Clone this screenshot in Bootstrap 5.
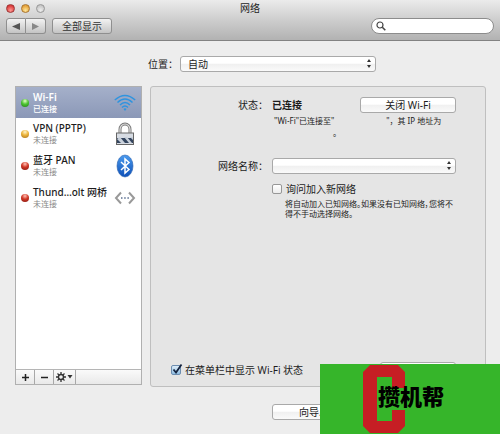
<!DOCTYPE html>
<html lang="zh-CN">
<head>
<meta charset="utf-8">
<meta name="viewport" content="width=device-width, initial-scale=1">
<title>网络</title>
<link rel="stylesheet" href="https://cdn.jsdelivr.net/npm/bootstrap@5.3.0/dist/css/bootstrap.min.css">
<style>
body{font-family:"Noto Sans","Noto Sans CJK SC",sans-serif;font-size:10px;line-height:14px;font-feature-settings:"palt";color:#1c1c1c;background:#ededed}
.titlebar{background:linear-gradient(#ebebeb,#d0d0d0 45%,#b2b2b2);border-bottom:1px solid #828282;padding:1px 6px 6px}
.titlebar .bar-title{font-size:10px;line-height:14px;margin:0;font-weight:400}
.side-col{flex:1 1 0}
.lights{gap:6px}
.light{width:9px;height:9px;border-radius:50%;border:1px solid #888;padding:0}
.light-red{background:radial-gradient(circle at 50% 75%,#ff9a94,#dc3c3c 70%);border-color:#9c3636}
.light-amber{background:radial-gradient(circle at 50% 75%,#ffe79a,#e5a33c 70%);border-color:#a87430}
.light-off{background:radial-gradient(circle at 50% 75%,#eee,#c2c2c2 80%);border-color:#979797}
.tool-row{margin-top:3px;gap:6px}
.tool{height:16px;font-size:10px;line-height:14px;padding:0 9px;border:1px solid #8f8f8f;border-radius:3px;background:linear-gradient(#f2f2f2,#c4c4c4);color:#333}
.tool-nav{width:20px;padding:0}
.tool-nav + .tool-nav{border-left:0}
.search-pill{width:123px;height:16px;border:1px solid #8c8c8c;border-radius:8px;background:#fff;padding:0 4px}
.search-pill svg{flex:none}
.search-pill input{min-width:0;height:12px;font-size:10px;background:none;outline:0}
.aqua{height:16px;font-size:10px;line-height:14px;padding:0;border:1px solid #a9a9a9;border-radius:3px;background:linear-gradient(#fff,#fff 45%,#f0f0f0 50%,#fafafa);color:#1c1c1c;text-align:center}
.pick{position:relative}
.pick select{appearance:none;width:100%;padding:0 16px 0 7px;text-align:left;display:block}
.pick svg{position:absolute;right:4px;top:3px;pointer-events:none}
.place-row{padding:15px 124px 14px 0}
.place-label{width:173px;text-align:right}
.place-row .pick{margin-left:7px}
.main-row{padding:0 14px 0 15px;gap:8px}
.services{width:127px;height:299px;background:#fff;border:1px solid #b0b0b0}
.service{height:32px;padding:0 5px;gap:4px;border:0;background:none;text-align:left;line-height:11px;color:#1c1c1c;font-weight:500}
.service small{display:block;font-size:8px;line-height:11px;color:#888;font-weight:400}
.service.chosen{height:31px;background:linear-gradient(#a5b0ca,#8b98b7);color:#fff;font-weight:600}
.service.chosen small{color:#fff;font-weight:500}
.dot{width:8px;height:8px;border-radius:50%;flex:none}
.dot-green{background:radial-gradient(circle at 50% 25%,#e6ffc8,#4cc530 45%,#267a1c)}
.dot-yellow{background:radial-gradient(circle at 50% 25%,#fff4cc,#ecb43a 45%,#a66d1c)}
.dot-red{background:radial-gradient(circle at 50% 25%,#ffc4b8,#d03524 45%,#811a14)}
.icon-box{width:22px;height:26px;flex:none}
.edit-bar{height:15px;border-top:1px solid #b5b5b5;background:linear-gradient(#fafafa,#e9e9e9)}
.edit-bar button{border:0;border-right:1px solid #a8a8a8;background:none;padding:0;width:19px;height:14px;display:flex;align-items:center;justify-content:center}
.edit-bar .gear{width:22px}
.detail{border:1px solid #bfbfbf;border-radius:3px;background:#e5e5e5;padding:10px 29px 8px 0;margin-bottom:-2px}
.field-label{width:112px;text-align:right;margin-right:9px;flex:none}
.tiny{font-size:8px;line-height:10px}
.status-note{padding:2px 0 0 123px;line-height:12px;font-feature-settings:normal}
.ssid-gap{display:inline-block;width:52px}
.addr-gap{display:inline-block;width:59px}
.wifi-toggle{width:96px}
.name-row{margin-top:19px}
.ask-row{margin:8px 0 0 121px}
.ask-note{padding:3px 0 0 134px}
.tick{appearance:none;width:10px;height:10px;margin:0;flex:none;border:1px solid #979797;border-radius:2px;background:linear-gradient(#fff,#ececec)}
.tick-wrap{position:relative;line-height:0}
.tick-wrap svg{position:absolute;left:0;bottom:0;display:none;pointer-events:none}
.tick:checked{background:linear-gradient(#dcecf8,#8fbde2);border-color:#6c8db0}
.tick:checked + svg{display:block}
.menu-row{padding-left:20px}
.adv{width:76px}
.foot-row{padding:19px 146px 14px 0}
.foot-row .aqua{width:82px}
.brand{position:absolute;right:0;bottom:0;width:180px;height:70px;background:#36b52a}
.brand svg{position:absolute;left:43px;top:1px}
.brand span{position:absolute;left:58px;top:15px;font-family:"Noto Sans CJK SC",sans-serif;font-size:22px;line-height:32px;font-weight:900;color:#000;white-space:nowrap}
</style>
<script src="https://cdn.jsdelivr.net/npm/bootstrap@5.3.0/dist/js/bootstrap.bundle.min.js"></script>
</head>
<body>
<div class="position-relative overflow-hidden min-vh-100 d-flex flex-column">
  <header class="titlebar">
    <div class="d-flex align-items-center">
      <div class="side-col d-flex lights align-items-center">
        <button class="light light-red" aria-label="关闭"></button>
        <button class="light light-amber" aria-label="最小化"></button>
        <button class="light light-off" aria-label="缩放"></button>
      </div>
      <h1 class="bar-title">网络</h1>
      <div class="side-col"></div>
    </div>
    <div class="tool-row d-flex align-items-center">
      <div class="btn-group" role="group">
        <button class="tool tool-nav rounded-end-0 d-flex align-items-center justify-content-center" aria-label="后退"><svg width="8" height="7"><path d="M8 0v7L0 3.500z" fill="#555"/></svg></button>
        <button class="tool tool-nav rounded-start-0 d-flex align-items-center justify-content-center" aria-label="前进"><svg width="8" height="7"><path d="M0 0v7l7-3.500z" fill="#888"/></svg></button>
      </div>
      <button class="tool">全部显示</button>
      <label class="search-pill ms-auto d-flex align-items-center">
        <svg width="10" height="10" viewBox="0 0 10 10" fill="none" stroke="#444"><circle cx="4" cy="4" r="3" stroke-width="1.200"/><path d="M6.300 6.300L9.300 9.300" stroke-width="1.600"/></svg>
        <input class="border-0 flex-grow-1 p-0 ms-1" type="search" aria-label="搜索">
      </label>
    </div>
  </header>

  <div class="place-row d-flex align-items-center">
    <label class="place-label" for="place">位置：</label>
    <div class="pick flex-grow-1">
      <select id="place" class="aqua"><option>自动</option></select>
      <svg width="6" height="9" viewBox="0 0 6 9" fill="#333"><path d="M3 0l2 3H1zM3 9l2-3H1z"/></svg>
    </div>
  </div>

  <main class="main-row d-flex">
    <aside class="services d-flex flex-column flex-shrink-0">
      <button class="service chosen d-flex align-items-center">
        <span class="dot dot-green"></span><span class="flex-grow-1">Wi-Fi<small>已连接</small></span>
        <svg class="icon-box" viewBox="0 0 22 26" fill="none" stroke="#2f94df" stroke-width="1.500"><path d="M.8 10Q11 1 21.200 10M3.500 12.500Q11 5.500 18.500 12.500M6 15Q11 10 16 15M8 17.500Q11 14.500 14 17.500"/><path d="M9.500 19Q11 17.500 12.500 19L11 21z" fill="#2f94df" stroke="none"/></svg>
      </button>
      <button class="service d-flex align-items-center">
        <span class="dot dot-yellow"></span><span class="flex-grow-1">VPN (PPTP)<small>未连接</small></span>
        <svg class="icon-box" viewBox="0 0 22 26"><path d="M6 13V8.500a5 5.500 0 0 1 10 0V13" fill="none" stroke="#777" stroke-width="3"/><path d="M6 13V8.500a5 5.500 0 0 1 10 0V13" fill="none" stroke="#e2e2e2" stroke-width="1.200"/><rect x="2.500" y="12" width="17" height="11.500" fill="#d7dce3" stroke="#666"/><path d="M3 17h16v5H3z" fill="#34455f"/><path d="M3 18l3-2 5 6H7zM10 16h3l5 6h-3zM16 16l3 3v-3z" fill="#c8d0da"/></svg>
      </button>
      <button class="service d-flex align-items-center">
        <span class="dot dot-red"></span><span class="flex-grow-1">蓝牙 PAN<small>未连接</small></span>
        <svg class="icon-box" viewBox="0 0 22 26"><defs><linearGradient id="bt" x2="0" y2="1"><stop stop-color="#4b9bee"/><stop offset="1" stop-color="#0e50b8"/></linearGradient></defs><ellipse cx="11" cy="13" rx="8" ry="11" fill="url(#bt)" stroke="#2b62ad" stroke-width=".6"/><path d="M7 9l8 7.500-4 3.500V6l4 3.500L7 17" fill="none" stroke="#fff" stroke-width="1.500"/></svg>
      </button>
      <button class="service d-flex align-items-center">
        <span class="dot dot-red"></span><span class="flex-grow-1 text-nowrap">Thund…olt 网桥<small>未连接</small></span>
        <svg class="icon-box" viewBox="0 0 22 26" fill="none" stroke="#999" stroke-width="2"><path d="M7 7.500L2 13l5 5.500M15 7.500l5 5.500-5 5.500"/><path d="M7 13h1.500M10.200 13h1.500M13.400 13h1.500" stroke="#8493ac"/></svg>
      </button>
      <div class="edit-bar d-flex mt-auto">
        <button aria-label="添加"><svg width="7" height="7"><path d="M0 3.500h7M3.500 0v7" stroke="#222" stroke-width="1.500"/></svg></button>
        <button aria-label="移除"><svg width="7" height="7"><path d="M0 3.500h7" stroke="#222" stroke-width="1.500"/></svg></button>
        <button class="gear" aria-label="操作"><svg width="17" height="10" viewBox="0 0 17 10"><g fill="none" stroke="#333"><circle cx="5" cy="5" r="2.500" stroke-width="1.400"/><path d="M5 0v2M5 8v2M0 5h2M8 5h2M1.500 1.500l1.400 1.400M7.100 7.100l1.400 1.400M1.500 8.500l1.400-1.400M7.100 2.900l1.400-1.400" stroke-width="1.300"/></g><path d="M11.500 3h5L14 6.500z" fill="#333"/></svg></button>
      </div>
    </aside>

    <section class="detail flex-grow-1 d-flex flex-column">
      <div class="d-flex align-items-center">
        <span class="field-label">状态：</span><span class="fw-semibold">已连接</span>
        <button class="aqua wifi-toggle ms-auto">关闭 Wi-Fi</button>
      </div>
      <div class="tiny status-note text-nowrap">"Wi-Fi"已连接至"<span class="ssid-gap"></span>"，其 IP 地址为<br><span class="addr-gap"></span>。</div>
      <div class="name-row d-flex align-items-center">
        <label class="field-label" for="ssid">网络名称：</label>
        <div class="pick flex-grow-1">
          <select id="ssid" class="aqua"><option></option></select>
          <svg width="6" height="9" viewBox="0 0 6 9" fill="#333"><path d="M3 0l2 3H1zM3 9l2-3H1z"/></svg>
        </div>
      </div>
      <div class="ask-row d-flex align-items-center gap-1">
        <input class="tick" type="checkbox" id="ask"><label for="ask">询问加入新网络</label>
      </div>
      <div class="tiny ask-note text-nowrap">将自动加入已知网络。如果没有已知网络，您将不<br>得不手动选择网络。</div>
      <div class="menu-row mt-auto d-flex align-items-center">
        <span class="tick-wrap"><input class="tick" type="checkbox" id="menu" checked><svg width="13" height="12" viewBox="0 0 13 12"><path d="M2.500 6.500L5 9.500 10.500 1.500" fill="none" stroke="#14233f" stroke-width="1.800"/></svg></span>
        <label class="ms-1" for="menu">在菜单栏中显示 Wi-Fi 状态</label>
        <button class="aqua adv ms-auto" aria-label="高级"></button>
      </div>
    </section>
  </main>

  <footer class="foot-row d-flex justify-content-end">
    <button class="aqua">向导...</button>
  </footer>

  <div class="brand">
    <svg width="42" height="68" viewBox="0 0 42 68"><path d="M7 0H35L42 7V23H29V12H14V56H29V45H42V61L35 68H7L0 61V7z" fill="#c61e24"/></svg>
    <span>攒机帮</span>
  </div>
</div>
</body>
</html>
